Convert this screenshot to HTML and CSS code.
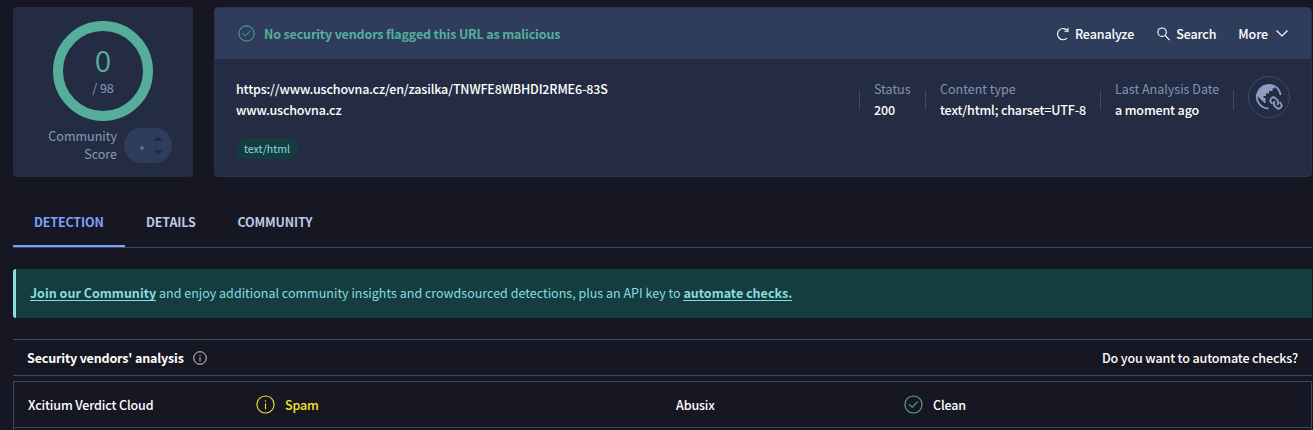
FILE: index.html
```html
<!DOCTYPE html>
<html lang="en">
<head>
<meta charset="utf-8">
<title>URL analysis</title>
<link rel="stylesheet" href="styles.css">
</head>
<body>
<svg class="defs" width="0" height="0">
  <symbol id="check" viewBox="0 0 20 20"><circle cx="10" cy="10" r="9"/><path d="M5.3 9.6l3.3 3.3L14.3 7"/></symbol>
  <symbol id="info" viewBox="0 0 20 20"><circle cx="10" cy="10" r="9"/><path d="M10 9v6M10 5.5v1.6"/></symbol>
</svg>
<main class="page">
  <section class="summary">
    <aside class="score-card">
      <div class="ring"><span class="ring-value">0</span><span class="ring-total">/ 98</span></div>
      <div class="community">
        <span class="community-label">Community<br>Score</span>
        <span class="votes"><i class="dot"></i><svg width="10" height="20" viewBox="0 0 10 20"><path d="M0 5l5-5 5 5zM0 14h10l-5 5z"/></svg></span>
      </div>
    </aside>
    <article class="report">
      <header class="report-head">
        <svg class="icon verdict-icon"><use href="#check"/></svg>
        <span class="verdict">No security vendors flagged this URL as malicious</span>
        <nav class="actions">
          <a class="action reanalyze"><svg class="icon" width="13" height="14" viewBox="0 0 13 14"><path d="M11.2 3.300A5.600 5.600 0 1 0 11 11.200"/><path class="tip" d="M12 1v3.200H8.500"/></svg><span>Reanalyze</span></a>
          <a class="action search"><svg class="icon" width="13" height="14" viewBox="0 0 13 14"><circle cx="5.1" cy="5.2" r="4.2"/><path d="M8.1 8.4l4.5 4.8"/></svg><span>Search</span></a>
          <a class="action more"><span>More</span><svg class="icon" width="12" height="7" viewBox="0 0 12 7"><path d="M.5.5L6 6l5.500-5.500"/></svg></a>
        </nav>
      </header>
      <div class="report-body">
        <div class="target">
          <div class="line url">https://www.uschovna.cz/en/zasilka/TNWFE8WBHDI2RME6-83S</div>
          <div class="line host">www.uschovna.cz</div>
          <span class="tag">text/html</span>
        </div>
        <div class="facts">
          <div class="fact status"><span class="fact-name">Status</span><span class="line">200</span></div>
          <div class="fact ctype"><span class="fact-name">Content type</span><span class="line">text/html; charset=UTF-8</span></div>
          <div class="fact date"><span class="fact-name">Last Analysis Date</span><span class="line">a moment ago</span></div>
          <div class="fact last">
            <svg class="globe" width="42" height="42" viewBox="0 0 42 42">
              <circle class="globe-edge" cx="21" cy="21" r="20.500"/>
              <path class="globe-line" d="M26 9.800A12 12 0 0 1 32.500 19M9 18A12 12 0 0 0 20.500 32.500"/>
              <path class="globe-land" d="M8.300 19A12.700 12.700 0 0 1 26.500 9.200V12.500h-2V15H21v2.500h-3V20h-2.500v2h2v5h-1z"/>
              <g class="globe-link" transform="rotate(45 28 27)"><path d="M26 30h-1.600a3 3 0 0 1 0-6H27a3 3 0 0 1 2.900 3.700M30 24h1.600a3 3 0 0 1 0 6H29a3 3 0 0 1-2.900-3.700"/></g>
            </svg>
          </div>
        </div>
      </div>
    </article>
  </section>
  <nav class="tabs">
    <a class="tab active"><span>DETECTION</span></a>
    <a class="tab details"><span>DETAILS</span></a>
    <a class="tab comm"><span>COMMUNITY</span></a>
  </nav>
  <p class="banner"><a class="b1">Join our Community</a><span class="b2"> and enjoy additional community insights and crowdsourced detections, plus an API key to </span><a class="b3">automate checks.</a></p>
  <header class="section-head">
    <strong class="section-title">Security vendors' analysis</strong>
    <svg class="icon section-info"><use href="#info"/></svg>
    <span class="automate">Do you want to automate checks?</span>
  </header>
  <section class="vendors">
    <div class="vendor-row">
      <span class="xcitium">Xcitium Verdict Cloud</span>
      <span class="result spam"><svg class="icon"><use href="#info"/></svg><span>Spam</span></span>
      <span class="abusix">Abusix</span>
      <span class="result clean"><svg class="icon"><use href="#check"/></svg><span>Clean</span></span>
    </div>
  </section>
</main>
</body>
</html>
```

FILE: styles.css
```css
* { box-sizing: border-box; }
body {
  margin: 0;
  background: #171723;
  color: #fff;
  font: 12.52px/21px "Noto Sans CJK SC", "Noto Sans", sans-serif;
}
.defs { display: block; position: absolute; }
.icon { flex: none; fill: none; stroke: currentColor; stroke-width: 1.15; overflow: visible; }
.page {
  display: flex;
  flex-direction: column;
  height: 430px;
  padding: 7px 1px 0 13px;
  white-space: nowrap;
}

.summary { display: flex; flex: none; gap: 21px; height: 170px; }
.score-card {
  width: 180px;
  padding-top: 14px;
  border-radius: 4px;
  background: #242c43;
  color: #8b99bb;
}
.ring {
  display: flex;
  flex-direction: column;
  align-items: center;
  width: 100px;
  height: 100px;
  margin: 0 auto;
  padding-top: 10px;
  border: 10px solid #56ad9a;
  border-radius: 50%;
}
.ring-value { color: #56ad9a; font-size: 30px; line-height: 36px; font-weight: 350; }
.ring-total { line-height: 22px; }
.community { display: flex; padding: 6px 0 0 34px; gap: 7px; }
.community-label { width: 70px; line-height: 18px; text-align: right; }
.votes {
  display: flex;
  align-items: center;
  width: 48px;
  height: 35px;
  margin-top: 1px;
  padding-left: 16px;
  gap: 9px;
  border-radius: 18px;
  background: #2e3d5c;
}
.votes svg { fill: #242c43; }
.dot { width: 4px; height: 4px; margin-top: 4px; border-radius: 50%; background: #5c6b8b; }

.report {
  flex: 1;
  border: 1px solid #28334e;
  border-radius: 4px;
  background: #242c43;
  overflow: hidden;
}
.report-head {
  display: flex;
  align-items: center;
  height: 51px;
  padding: 0 23px;
  background: #2e3d5c;
}
.verdict-icon { width: 17px; height: 17px; color: #56ad9a; }
.verdict { margin-left: 9px; padding-bottom: 1px; color: #56ad9a; font-weight: 700; letter-spacing: -.165px; }
.actions { display: flex; gap: 23px; margin-left: auto; }
.action { display: flex; align-items: center; font-weight: 500; letter-spacing: -.13px; }
.action span { padding-bottom: 1px; }
.action.reanalyze, .action.search { gap: 6px; }
.action.more { gap: 8px; margin-left: -1px; }
.report-body { display: flex; justify-content: space-between; padding: 19px 21px 0; }
.line { font-weight: 500; letter-spacing: -.155px; }
.tag {
  display: inline-block;
  height: 21px;
  margin-top: 18px;
  padding: 0 8px;
  border-radius: 11px;
  background: #153c3f;
  color: #86dce0;
  font-size: 10.6px;
}
.facts { display: flex; }
.fact { position: relative; display: flex; flex-direction: column; padding-left: 15px; }
.fact::before {
  content: "";
  position: absolute;
  left: 0;
  top: 12px;
  width: 1px;
  height: 20px;
  background: #3d4b6b;
}
.fact.status { width: 66px; }
.fact.ctype { width: 175px; }
.fact.date { width: 133px; }
.fact-name { color: #8393b8; }
.globe { margin-top: -2px; }
.globe-edge { fill: none; stroke: #3d4b6b; }
.globe-line { fill: none; stroke: #8f9dc0; stroke-width: 1.8; }
.globe-land { fill: #8f9dc0; }
.globe-link { fill: none; stroke: #8f9dc0; stroke-width: 1.8; }

.tabs {
  display: flex;
  flex: none;
  height: 71px;
  border-bottom: 1px solid #3d4663;
  font-weight: 700;
  letter-spacing: -.17px;
  color: #bbc8e5;
}
.tab { padding: 34px 21px 0; }
.tab.active { width: 112px; border-bottom: 2px solid #7da2fb; color: #7da2fb; }

.banner {
  display: flex;
  flex: none;
  height: 49px;
  margin: 21px 0;
  padding: 13px 14px;
  border-left: 3px solid #8bdee0;
  border-radius: 3px 0 0 3px;
  background: #153c3f;
  color: #86dce0;
  white-space: pre;
}
.banner a { height: 19px; font-weight: 700; border-bottom: 1px solid #86dce0; }

.section-head {
  display: flex;
  flex: none;
  align-items: center;
  height: 37px;
  padding: 0 14px;
  border: solid #3d4663;
  border-width: 1px 0;
}
.section-title { padding-bottom: 1px; letter-spacing: -.17px; }
.section-info { width: 14px; height: 14px; margin-left: 9px; }
.automate { margin-left: auto; padding-bottom: 1px; font-weight: 500; letter-spacing: -.14px; }
.vendors {
  flex: 1;
  margin-top: 5px;
  border: solid #3d4663;
  border-width: 1px 1px 0;
  font-weight: 500;
  letter-spacing: -.14px;
}
.vendor-row {
  display: grid;
  grid-template-columns: 228px 420px 228px 1fr;
  align-items: center;
  height: 46px;
  padding-left: 14px;
  border-bottom: 1px solid #3d4663;
}
.vendor-row span { padding-bottom: 1px; }
.vendor-row .result { padding-bottom: 0; }
.result { display: flex; align-items: center; gap: 10px; }
.result .icon { width: 19px; height: 19px; }
.result.spam { color: #f3e52d; }
.clean .icon { color: #56ad9a; }
```
